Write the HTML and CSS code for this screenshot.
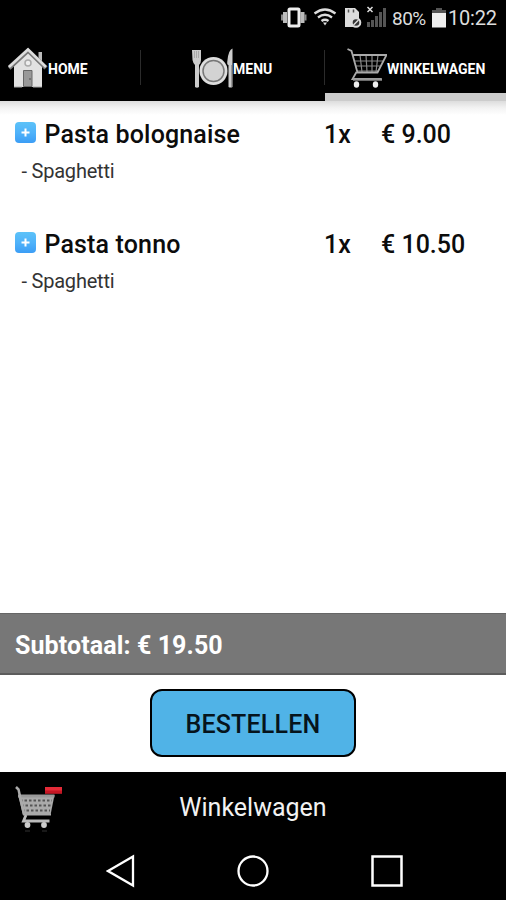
FILE: index.html
```
<!DOCTYPE html>
<html lang="nl">
<head>
<meta charset="utf-8">
<title>Winkelwagen</title>
<link rel="stylesheet" href="styles.css">
</head>
<body>
<div class="status">
<svg class="status-icons" width="108" height="36" viewBox="280 0 108 36">
<path d="M282 14.500v6M305.500 14.500v6" stroke="#888" stroke-width="2"/>
<path d="M285 12v11M302.500 12v11" stroke="#bbb" stroke-width="4"/>
<rect x="289" y="9" width="10" height="17" rx="1" fill="none" stroke="#eee" stroke-width="3"/>
<path d="M314.500 13.500q10.500-8 21 0M318 17.500q7-5.500 14 0M321.500 21q3.500-2.500 7 0" fill="none" stroke="#ddd" stroke-width="2.300"/>
<path d="M323 22.500h4l-2 3z" fill="#ddd"/>
<path d="M345 8h10l4 4v15h-14z" fill="#ddd"/>
<path d="M348.500 9.500v3M353.500 9.500v3" stroke="#555" stroke-width="1.500"/>
<circle cx="356" cy="22.500" r="4.300" fill="#333" stroke="#ddd" stroke-width="2"/>
<path d="M353.500 25l5-5" stroke="#ddd" stroke-width="1.500"/>
<path d="M367.500 7l5 5M372.500 7l-5 5" stroke="#ddd" stroke-width="1.500"/>
<path d="M368.500 27v-5M372.500 27v-7M376.500 27v-11M380.500 27v-15M384.500 27v-19" stroke="#555" stroke-width="3"/>
</svg>
<span class="percent">80%</span>
<svg class="battery" width="14" height="36" viewBox="0 0 14 36">
<path d="M4 8h6v2h4v4h-14v-4h4z" fill="#555"/>
<path d="M0 13h14v14.500h-14z" fill="#eee"/>
</svg>
<span class="clock">10:22</span>
</div>

<div class="tabs">
<div class="tab tab-home">
<svg width="40" height="42" viewBox="8 47 40 42">
<path d="M38.500 52h3.500v11h-3.500z" fill="#bbb"/>
<path d="M14 66l14-14 14 14v21h-28z" fill="#e2e2e2"/>
<path d="M9 68l19-17.500 18 17.500" fill="none" stroke="#777" stroke-width="4.500"/>
<path d="M9 67l19-17.500 18 17.500" fill="none" stroke="#ddd" stroke-width="2.500"/>
<circle cx="28" cy="63" r="3" fill="#eee" stroke="#aaa" stroke-width="1.500"/>
<path d="M23.500 70.500h8.500v16h-8.500z" fill="#999" stroke="#666"/>
<circle cx="30" cy="79" r="0.800" fill="#444"/>
<path d="M14 87h8M33 87h9" stroke="#aaa"/>
</svg>
<span>HOME</span>
</div>
<div class="tab tab-menu">
<svg width="41" height="42" viewBox="192 47 41 42">
<path d="M192 50h9v10q0 3-2 5v22q-2 1.500-4 0v-22q-2-2-2.500-5z" fill="#ccc"/>
<path d="M194.500 51v7M196.500 51v7M198.500 51v7" stroke="#999" stroke-width="0.700"/>
<circle cx="213.500" cy="71" r="14" fill="#ddd"/>
<circle cx="213.500" cy="71" r="10.500" fill="#d3d3d3" stroke="#777" stroke-width="1.500"/>
<path d="M232.500 48.500v38.500q-2 1-4 0v-22q-2 0-1-5 1-10 5-11.500z" fill="#ccc"/>
<path d="M231.500 65v22" stroke="#999"/>
</svg>
<span>MENU</span>
</div>
<div class="tab tab-cart">
<svg width="40" height="42" viewBox="347 47 40 42">
<path d="M354 61h29M356 66h25M357 71h22M360 55l2 17M366 55l1 17M372 55v17M378 55l-2 17" fill="none" stroke="#888" stroke-width="1.200"/>
<path d="M347.500 49l4 2 6 21.500h20l9-17.500h-33M356.500 72l-4 7h29" fill="none" stroke="#aaa" stroke-width="1.800"/>
<path d="M353 79.500h29" stroke="#999" stroke-width="2.400"/>
<ellipse cx="356.500" cy="84.500" rx="2.700" ry="3.200" fill="#eee"/>
<ellipse cx="375.500" cy="84.500" rx="2.700" ry="3.200" fill="#eee"/>
</svg>
<span>WINKELWAGEN</span>
</div>
</div>

<div class="order">
<div class="item">
<div class="item-line">
<span class="plus"><svg width="21" height="21" viewBox="0 0 21 21"><path d="M10.500 6.500v8M6.500 10.500h8" stroke="#fff" stroke-width="2"/></svg></span>
<span class="name">Pasta bolognaise</span>
<span class="count">1x</span>
<span class="price">€ 9.00</span>
</div>
<div class="option">- Spaghetti</div>
</div>
<div class="item">
<div class="item-line">
<span class="plus"><svg width="21" height="21" viewBox="0 0 21 21"><path d="M10.500 6.500v8M6.500 10.500h8" stroke="#fff" stroke-width="2"/></svg></span>
<span class="name">Pasta tonno</span>
<span class="count">1x</span>
<span class="price">€ 10.50</span>
</div>
<div class="option">- Spaghetti</div>
</div>
</div>

<div class="subtotal"><span>Subtotaal: € 19.50</span></div>
<div class="action"><button class="order-button">BESTELLEN</button></div>

<div class="footer">
<svg width="50" height="48" viewBox="14 783 50 48">
<path d="M18 794h36.500l-4 20h-27.500z" fill="#aaa"/>
<path d="M20 799.500h32M21 804.500h30M22 809.500h28" stroke="#555" stroke-width="2" stroke-dasharray="2.500 2"/>
<path d="M18 795h36.500" stroke="#999" stroke-width="3"/>
<path d="M23 813.500h28" stroke="#aaa" stroke-width="2"/>
<path d="M16 786l2.500 2.500 5.500 25" fill="none" stroke="#aaa" stroke-width="2.500"/>
<path d="M26 814l-2.500 6h26" fill="none" stroke="#bbb" stroke-width="2.800"/>
<circle cx="27.500" cy="824" r="2.900" fill="#ccc"/>
<circle cx="44" cy="824" r="2.900" fill="#ccc"/>
<path d="M25 830h5M42 830h5" stroke="#333"/>
<path d="M45 786h17v6.500h-17z" fill="#e52b38"/>
<path d="M45 789.500h17v3h-17z" fill="#c51623"/>
</svg>
<span class="footer-title">Winkelwagen</span>
</div>

<div class="softkeys">
<svg width="30" height="34" viewBox="0 0 30 34"><path d="M2 17l25-14.500v29z" fill="none" stroke="#fff" stroke-width="2.300"/></svg>
<svg width="34" height="34" viewBox="0 0 34 34"><circle cx="17" cy="17" r="14.500" fill="none" stroke="#fff" stroke-width="2.300"/></svg>
<svg width="34" height="34" viewBox="0 0 34 34"><path d="M2.500 2.500h29v29h-29z" fill="none" stroke="#fff" stroke-width="2.500"/></svg>
</div>
</body>
</html>
```
FILE: styles.css
```
body {
margin: 0;
width: 506px;
height: 900px;
overflow: hidden;
display: flex;
flex-direction: column;
background: #fff;
color: #0c0c0c;
font-family: Roboto, sans-serif;
}

svg { display: block; flex: none; }
span { white-space: nowrap; }

/* Android status bar */
.status {
height: 36px;
flex: none;
display: flex;
align-items: center;
padding-left: 280px;
background: #000;
color: #ddd;
}

.percent { width: 38px; margin-left: 4px; font-size: 19px; letter-spacing: -0.5px; }
.battery { margin-left: 2px; }
.clock { margin-left: 2px; font-size: 20px; letter-spacing: -0.2px; }

/* Tabs */
.tabs {
height: 65px;
flex: none;
display: grid;
grid-template-columns: 141px 184px 181px;
background: #000;
color: #fff;
font-size: 14px;
font-weight: 700;
}

.tab {
display: flex;
align-items: center;
box-sizing: border-box;
padding-bottom: 1px;
background: linear-gradient(#2b2b2b, #2b2b2b) right 14px / 1px 35px no-repeat;
}

.tab span { margin-top: 2px; }
.tab-home { padding-left: 8px; }
.tab-menu { padding-left: 51px; }
.tab-cart { padding-left: 22px; padding-bottom: 0; border-bottom: 8px solid #ccc; background: none; }
.tab-cart svg { margin-top: 7px; }
.tab-cart span { margin-top: 8px; }

/* Ordered dishes */
.order {
flex: 1;
padding-top: 16px;
background: linear-gradient(#ddd, #f3f3f3 7px, #fff 14px);
}

.item { height: 110px; }

.item-line {
display: grid;
grid-template-columns: 29.5px 279.5px 57px auto;
align-items: center;
height: 34px;
padding-left: 15px;
font-size: 25px;
font-weight: 500;
}

.name { letter-spacing: 0.15px; }

.plus {
width: 21px;
height: 21px;
margin-top: -4px;
border-radius: 4px;
background: linear-gradient(#5cc2f8, #50b3fa 50%, #3b9df5);
}

.option {
padding-left: 21.5px;
font-size: 20px;
letter-spacing: -0.22px;
line-height: 40px;
color: #333;
}

.subtotal {
height: 62px;
flex: none;
box-sizing: border-box;
border-top: 1px solid #666;
border-bottom: 2px solid #5c5c5c;
padding: 4px 0 0 15px;
display: flex;
align-items: center;
background: #777;
color: #fff;
font-size: 25px;
font-weight: 700;
letter-spacing: 0.1px;
}

.action {
height: 97px;
flex: none;
box-sizing: border-box;
padding-top: 14px;
text-align: center;
}

.order-button {
width: 206px;
height: 68px;
border: 2px solid #000;
border-radius: 12px;
padding: 2px 0 0;
background: #50b3e7;
color: #06141c;
font: 500 25px Roboto, sans-serif;
letter-spacing: 0.2px;
}

.footer {
height: 71px;
flex: none;
display: grid;
grid-template-columns: 50px 1fr;
align-items: center;
padding: 0 64px 0 14px;
background: #000;
color: #f2f2f2;
font-size: 25px;
}

.footer-title { text-align: center; }

.softkeys {
height: 57px;
flex: none;
display: flex;
justify-content: space-between;
align-items: center;
box-sizing: border-box;
padding: 0 102px 2px 106px;
background: #000;
}
```
